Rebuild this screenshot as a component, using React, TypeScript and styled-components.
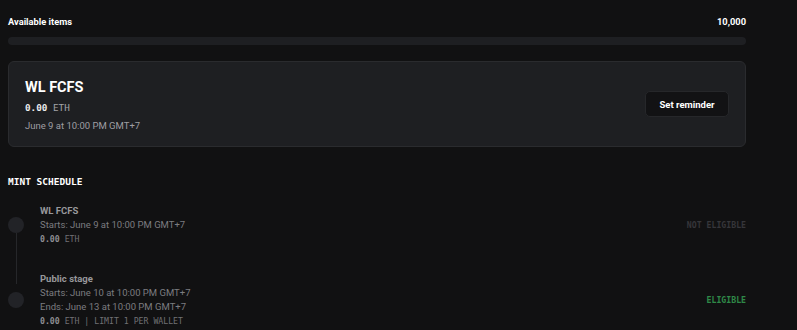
import React from "react";
import styled, { createGlobalStyle } from "styled-components";

const Global = createGlobalStyle`
  html, body { margin: 0; padding: 0; background: #111112; }
  body { font-family: Roboto, Inter, "Noto Sans", sans-serif; color: #fff; }
`;

const Page = styled.div`
  width: 738px;
  padding: 14px 0 0 8px;
  display: flex;
  flex-direction: column;
`;

const SupplyRow = styled.div`
  display: flex;
  justify-content: space-between;
  align-items: center;
  height: 14px;
  font-size: 9.3px;
  font-weight: 700;
  color: #fff;
`;

const Bar = styled.div`
  margin-top: 9px;
  height: 8px;
  border-radius: 4px;
  background: #1e1f22;
`;

const Card = styled.div`
  margin-top: 16px;
  height: 86px;
  box-sizing: border-box;
  border: 1px solid #2a2b2e;
  border-radius: 6px;
  background: #1e1f22;
  display: flex;
  align-items: flex-start;
  justify-content: space-between;
  padding: 17px 16px 0 16px;
`;

const CardInfo = styled.div`
  display: flex;
  flex-direction: column;
`;

const CardTitle = styled.div`
  font-size: 14.5px;
  font-weight: 700;
  line-height: 18px;
  color: #fff;
`;

const Price = styled.div`
  margin-top: 2px;
  font-family: "DejaVu Sans Mono", "Liberation Mono", monospace;
  font-size: 9.3px;
  line-height: 18px;
  color: #a4a4a8;
  b { color: #ececee; font-weight: 700; }
`;

const CardDate = styled.div`
  font-size: 9.5px;
  line-height: 18px;
  color: #9e9ea2;
`;

const ReminderButton = styled.button`
  align-self: center;
  margin-top: -17px;
  width: 84px;
  height: 26px;
  border: 1px solid #26272a;
  border-radius: 5px;
  background: #121214;
  color: #fff;
  font-family: Roboto, Inter, sans-serif;
  font-size: 9.5px;
  font-weight: 700;
  padding: 0;
`;

const SectionTitle = styled.div`
  margin-top: 28px;
  font-family: "DejaVu Sans Mono", "Liberation Mono", monospace;
  font-weight: 700;
  font-size: 9.5px;
  line-height: 14px;
  color: #fff;
`;

const Schedule = styled.div`
  margin-top: 15px;
  display: flex;
  flex-direction: column;
  gap: 26px;
`;

const Stage = styled.div<{ $last?: boolean }>`
  position: relative;
  display: flex;
  align-items: center;
  &::after {
    content: "";
    display: ${(p) => (p.$last ? "none" : "block")};
    position: absolute;
    left: 8px;
    top: calc(50% + 8px);
    width: 1px;
    height: 51px;
    background: #26272a;
  }
`;

const Dot = styled.div`
  width: 16px;
  height: 16px;
  border-radius: 50%;
  background: #222327;
  flex: none;
`;

const StageInfo = styled.div`
  margin-left: 16px;
  flex: 1;
  display: flex;
  flex-direction: column;
`;

const StageName = styled.div`
  font-size: 9.5px;
  font-weight: 700;
  line-height: 14px;
  color: #98989b;
`;

const StageLine = styled.div`
  font-size: 9.5px;
  line-height: 14px;
  color: #7c7c80;
`;

const StageMeta = styled.div`
  font-family: "DejaVu Sans Mono", "Liberation Mono", monospace;
  font-size: 8.2px;
  line-height: 14px;
  color: #707074;
  b { color: #8e8e92; font-weight: 700; }
`;

const Status = styled.div<{ $ok?: boolean }>`
  font-family: "DejaVu Sans Mono", "Liberation Mono", monospace;
  font-size: 8.2px;
  font-weight: 700;
  color: ${(p) => (p.$ok ? "#2f8a48" : "#36363a")};
`;

export default function App() {
  return (
    <>
      <Global />
      <Page>
        <SupplyRow>
          <span>Available items</span>
          <span>10,000</span>
        </SupplyRow>
        <Bar />
        <Card>
          <CardInfo>
            <CardTitle>WL FCFS</CardTitle>
            <Price>
              <b>0.00</b> ETH
            </Price>
            <CardDate>June 9 at 10:00 PM GMT+7</CardDate>
          </CardInfo>
          <ReminderButton>Set reminder</ReminderButton>
        </Card>
        <SectionTitle>MINT SCHEDULE</SectionTitle>
        <Schedule>
          <Stage>
            <Dot />
            <StageInfo>
              <StageName>WL FCFS</StageName>
              <StageLine>Starts: June 9 at 10:00 PM GMT+7</StageLine>
              <StageMeta>
                <b>0.00</b> ETH
              </StageMeta>
            </StageInfo>
            <Status>NOT ELIGIBLE</Status>
          </Stage>
          <Stage $last>
            <Dot />
            <StageInfo>
              <StageName>Public stage</StageName>
              <StageLine>Starts: June 10 at 10:00 PM GMT+7</StageLine>
              <StageLine>Ends: June 13 at 10:00 PM GMT+7</StageLine>
              <StageMeta>
                <b>0.00</b> ETH | LIMIT 1 PER WALLET
              </StageMeta>
            </StageInfo>
            <Status $ok>ELIGIBLE</Status>
          </Stage>
        </Schedule>
      </Page>
    </>
  );
}
